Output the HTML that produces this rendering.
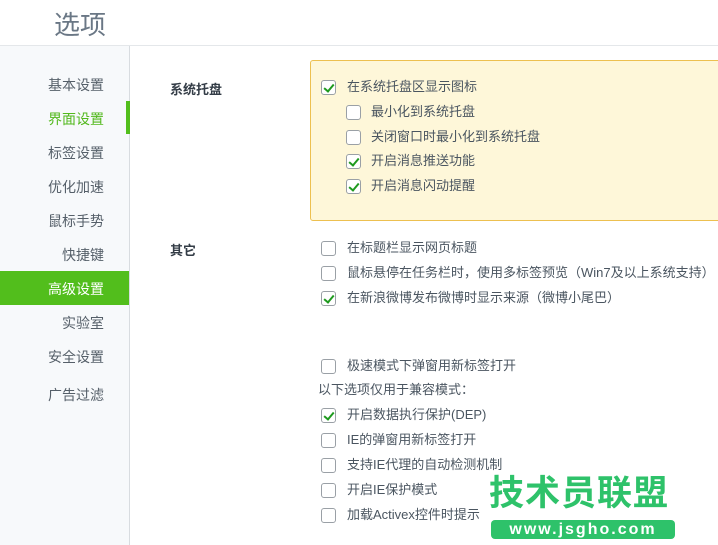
<!DOCTYPE html>
<html><head><meta charset="utf-8"><style>
*{margin:0;padding:0;box-sizing:border-box}
body{width:718px;height:545px;overflow:hidden;background:#fff;font-family:"Liberation Sans","Noto Sans CJK SC",sans-serif;position:relative;color:#4a5560}
.hdr{position:absolute;left:0;top:0;width:718px;height:46px;border-bottom:1px solid #e4e7ea}
.hdr span{position:absolute;left:54px;top:5px;font-size:26px;color:#6a7785}
.side{position:absolute;left:0;top:46px;width:130px;height:499px;background:#f7f9fb;border-right:1px solid #d8dce0}
.it{position:absolute;right:25px;font-size:14px;color:#555f69;line-height:20px}
.act{position:absolute;left:0;top:225px;width:129px;height:34px;background:#52be1c}
.bar{position:absolute;left:126px;top:55px;width:4px;height:33px;background:#52be1c}
.lbl{position:absolute;font-size:13px;font-weight:bold;color:#333c46}
.box{position:absolute;left:310px;top:60px;width:420px;height:161px;background:#fef7d9;border:1px solid #edc050;border-radius:3px}
.cb{position:absolute;width:15px;height:15px;border:1px solid #9aa0a6;border-radius:3px;background:#fff}
.cb.c::after{content:"";position:absolute;left:4px;top:1px;width:4px;height:8px;border:solid #1e9a1e;border-width:0 2px 2px 0;transform:rotate(40deg)}
.t{position:absolute;font-size:13px;color:#4a5560;line-height:18px;white-space:nowrap}
.logo{position:absolute;left:489px;top:474px;font-size:35px;font-weight:bold;color:#2ec26a;letter-spacing:1px;line-height:40px}
.pill{position:absolute;left:491px;top:520px;width:184px;height:19px;background:#2ec26a;border-radius:4px;color:#fff;font-size:16px;font-weight:bold;text-align:center;line-height:19px;letter-spacing:2px}
</style></head><body>
<div class="hdr"><span>选项</span></div>
<div class="side">
<div class="act"></div><div class="bar"></div>
<div class="it" style="top:29px">基本设置</div>
<div class="it" style="top:63px;color:#52b81c">界面设置</div>
<div class="it" style="top:97px">标签设置</div>
<div class="it" style="top:131px">优化加速</div>
<div class="it" style="top:165px">鼠标手势</div>
<div class="it" style="top:199px">快捷键</div>
<div class="it" style="top:233px;color:#fff">高级设置</div>
<div class="it" style="top:267px">实验室</div>
<div class="it" style="top:301px">安全设置</div>
<div class="it" style="top:339px">广告过滤</div>
</div>
<div class="lbl" style="left:170px;top:79px">系统托盘</div>
<div class="lbl" style="left:170px;top:240px">其它</div>
<div class="box"></div>
<div class="cb c" style="left:321px;top:80px"></div><div class="t" style="left:347px;top:78px">在系统托盘区显示图标</div>
<div class="cb" style="left:346px;top:105px"></div><div class="t" style="left:371px;top:103px">最小化到系统托盘</div>
<div class="cb" style="left:346px;top:130px"></div><div class="t" style="left:371px;top:128px">关闭窗口时最小化到系统托盘</div>
<div class="cb c" style="left:346px;top:154px"></div><div class="t" style="left:371px;top:152px">开启消息推送功能</div>
<div class="cb c" style="left:346px;top:179px"></div><div class="t" style="left:371px;top:177px">开启消息闪动提醒</div>
<div class="cb" style="left:321px;top:241px"></div><div class="t" style="left:347px;top:239px">在标题栏显示网页标题</div>
<div class="cb" style="left:321px;top:266px"></div><div class="t" style="left:347px;top:264px">鼠标悬停在任务栏时，使用多标签预览（Win7及以上系统支持）</div>
<div class="cb c" style="left:321px;top:291px"></div><div class="t" style="left:347px;top:289px">在新浪微博发布微博时显示来源（微博小尾巴）</div>
<div class="cb" style="left:321px;top:359px"></div><div class="t" style="left:347px;top:357px">极速模式下弹窗用新标签打开</div>
<div class="t" style="left:318px;top:381px">以下选项仅用于兼容模式：</div>
<div class="cb c" style="left:321px;top:408px"></div><div class="t" style="left:347px;top:406px">开启数据执行保护(DEP)</div>
<div class="cb" style="left:321px;top:433px"></div><div class="t" style="left:347px;top:431px">IE的弹窗用新标签打开</div>
<div class="cb" style="left:321px;top:458px"></div><div class="t" style="left:347px;top:456px">支持IE代理的自动检测机制</div>
<div class="cb" style="left:321px;top:483px"></div><div class="t" style="left:347px;top:481px">开启IE保护模式</div>
<div class="cb" style="left:321px;top:508px"></div><div class="t" style="left:347px;top:506px">加载Activex控件时提示</div>
<div class="logo">技术员联盟</div>
<div class="pill">www.jsgho.com</div>
</body></html>
